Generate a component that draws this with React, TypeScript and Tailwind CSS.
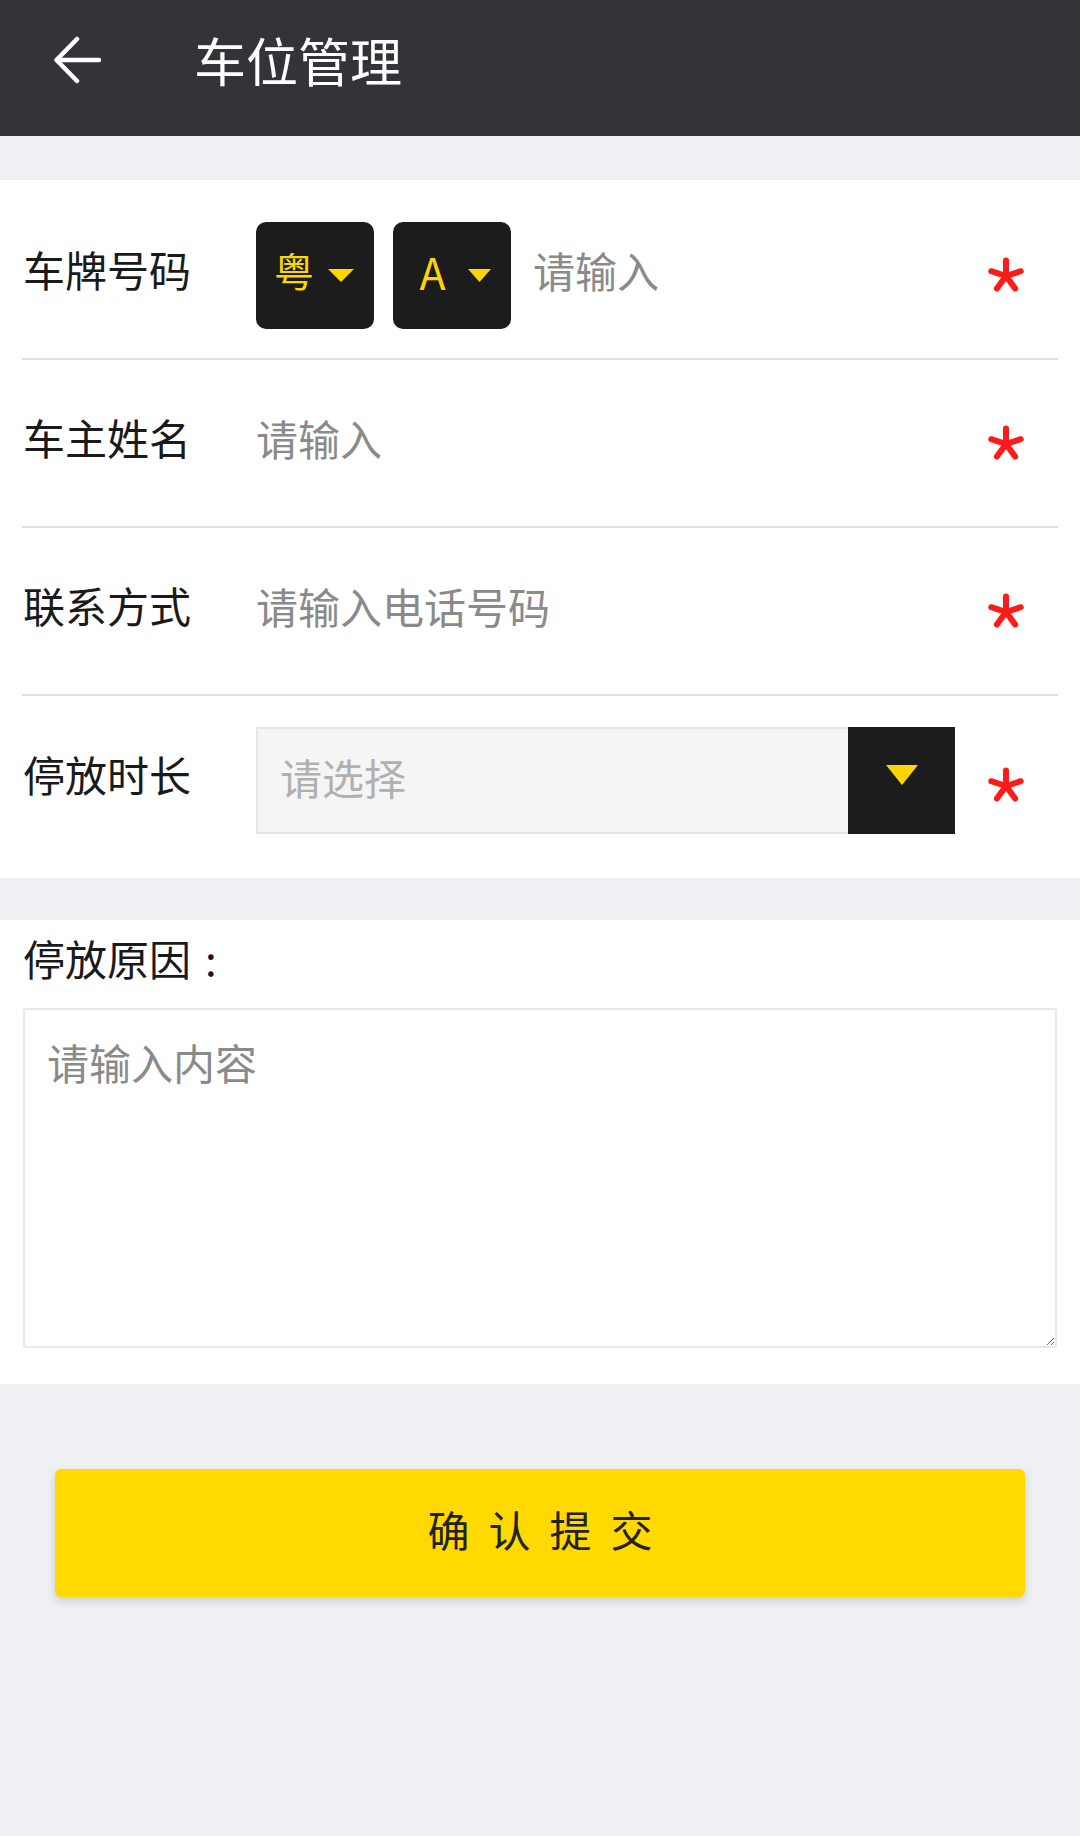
import React from "react";

const FONT = "font-['Noto_Sans_CJK_SC','Noto_Sans',sans-serif]";

function Asterisk({ className = "" }: { className?: string }) {
  const arms = [-90, -18, 54, 126, 198];
  return (
    <svg width="38" height="38" viewBox="0 0 38 38" className={className}>
      {arms.map((a) => {
        const r = (a * Math.PI) / 180;
        return (
          <line
            key={a}
            x1={19}
            y1={20}
            x2={19 + Math.cos(r) * 15.5}
            y2={20 + Math.sin(r) * 15.5}
            stroke="#ff1a1a"
            strokeWidth={6}
            strokeLinecap="round"
          />
        );
      })}
    </svg>
  );
}

function Tri({ w, h }: { w: number; h: number }) {
  return (
    <svg width={w} height={h} viewBox={`0 0 ${w} ${h}`}>
      <polygon points={`0,0 ${w},0 ${w / 2},${h}`} fill="#ffd500" />
    </svg>
  );
}

function Row({
  label,
  children,
  last = false,
  starClass = "",
}: {
  label: string;
  children: React.ReactNode;
  last?: boolean;
  starClass?: string;
}) {
  return (
    <div
      className={`mx-[22px] h-[168px] flex items-center pl-[1px] ${
        last ? "" : "border-b-2 border-[#e0e0e0]"
      }`}
    >
      <div className="w-[233px] shrink-0 text-[42px] leading-[56px] pb-[12px] text-[#1a1a1a]">
        {label}
      </div>
      <div className="flex-1 flex items-center min-w-0">{children}</div>
      <div className={`ml-[32px] mr-[33px] shrink-0 flex items-center ${starClass}`}>
        <Asterisk />
      </div>
    </div>
  );
}

const inputCls =
  "flex-1 min-w-0 h-[68px] pb-[12px] bg-transparent outline-none text-[42px] leading-[56px] text-[#1a1a1a] placeholder:text-[#8a8a8a]";

export default function App() {
  return (
    <div className={`${FONT} min-h-[1836px] bg-[#eff0f4]`}>
      {/* Header */}
      <div className="h-[136px] bg-[#333338] flex items-center">
        <div className="ml-[53px] mb-[16px] w-[48px] h-[48px] flex items-center justify-center">
          <svg width="48" height="48" viewBox="0 0 48 48" fill="none">
            <path d="M46 24 H5" stroke="#fff" strokeWidth="4.5" strokeLinecap="round" />
            <path
              d="M24 3 L3.5 24 L24 45"
              stroke="#fff"
              strokeWidth="4.5"
              strokeLinecap="round"
              strokeLinejoin="round"
            />
          </svg>
        </div>
        <div className="ml-[93px] text-[52px] leading-[64px] pb-[16px] text-white">
          车位管理
        </div>
      </div>

      <div className="h-[44px]" />

      {/* Form section */}
      <div className="bg-white pt-[12px] pb-[14px]">
        <Row label="车牌号码">
          <div className="flex items-center gap-[19px]">
            <div className="w-[118px] h-[107px] rounded-[10px] bg-[#1c1c1c] flex items-center justify-center gap-[14px] pr-[2px]">
              <span className="text-[40px] leading-none pb-[10px] text-[#ffd500]">粤</span>
              <Tri w={26} h={13} />
            </div>
            <div className="w-[118px] h-[107px] rounded-[10px] bg-[#1c1c1c] flex items-center justify-center gap-[22px] pl-[6px]">
              <span className="text-[43px] leading-none pb-[8px] text-[#ffd500]">A</span>
              <Tri w={23} h={13} />
            </div>
          </div>
          <input placeholder="请输入" className={`ml-[22px] ${inputCls}`} />
        </Row>
        <Row label="车主姓名">
          <input placeholder="请输入" className={inputCls} />
        </Row>
        <Row label="联系方式">
          <input placeholder="请输入电话号码" className={inputCls} />
        </Row>
        <Row label="停放时长" last starClass="mt-[10px]">
          <div className="flex-1 h-[107px] flex border-2 border-[#e6e6e6] bg-[#f5f5f5]">
            <div className="flex-1 flex items-center pl-[22px] pb-[6px] text-[42px] leading-none text-[#b0b0b0]">
              请选择
            </div>
            <div className="w-[107px] -my-[2px] -mr-[2px] bg-[#1c1c1c] flex items-center justify-center pb-[10px]">
              <Tri w={32} h={20} />
            </div>
          </div>
        </Row>
      </div>

      <div className="h-[42px]" />

      {/* Reason section */}
      <div className="bg-white pt-[16px] pb-[36px] px-[23px]">
        <div className="h-[52px] pb-[8px] flex items-center text-[42px] leading-[52px] text-[#1a1a1a]">
          停放原因<span className="ml-[14px]">:</span>
        </div>
        <textarea
          placeholder="请输入内容"
          className="mt-[20px] block w-full h-[340px] border-2 border-[#e8e8e8] rounded-[2px] px-[22px] pt-[22px] text-[42px] leading-[60px] text-[#1a1a1a] placeholder:text-[#8a8a8a] outline-none"
        />
      </div>

      <div className="h-[85px]" />

      {/* Submit */}
      <div className="mx-[55px]">
        <button className="w-full h-[128px] rounded-[6px] bg-[#ffd900] shadow-[0_4px_10px_rgba(0,0,0,0.15)] flex items-center justify-center pb-[8px]">
          <span className="text-[42px] leading-none tracking-[19px] pl-[19px] text-[#222]">
            确认提交
          </span>
        </button>
      </div>
    </div>
  );
}
